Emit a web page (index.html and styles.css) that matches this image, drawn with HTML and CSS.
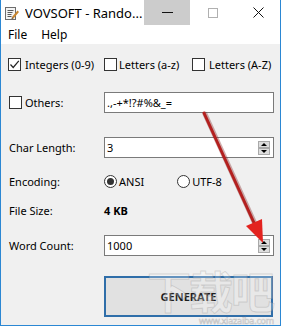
FILE: index.html
```html
<!DOCTYPE html>
<html>
<head>
<meta charset="utf-8">
<link rel="stylesheet" href="styles.css">
</head>
<body>
<div class="window">
  <div class="titlebar">
    <svg class="app-icon" viewBox="0 0 14 14">
      <rect x="0.5" y="1.5" width="10" height="12" fill="#f4f4f4" stroke="#6d6d6d"/>
      <line x1="2.5" y1="4.5" x2="8.5" y2="4.5" stroke="#5a5a5a"/>
      <line x1="2.5" y1="6.5" x2="7.5" y2="6.5" stroke="#5a5a5a"/>
      <line x1="2.5" y1="8.5" x2="6.5" y2="8.5" stroke="#5a5a5a"/>
      <line x1="2.5" y1="10.5" x2="6.5" y2="10.5" stroke="#5a5a5a"/>
      <path d="M7 11 L12.5 4.5 L14 6 L8.5 12.5 Z" fill="#c9862f"/>
      <path d="M7 11 L6.5 13 L8.5 12.5 Z" fill="#5b3a12"/>
    </svg>
    <span class="title">VOVSOFT - Rando...</span>
    <div class="caption">
      <div class="cbtn min"><span class="min-line"></span></div>
      <div class="cbtn max"><span class="max-box"></span></div>
      <div class="cbtn close">
        <svg width="11" height="11" viewBox="0 0 11 11"><path d="M0.5 0.5 L10.5 10.5 M10.5 0.5 L0.5 10.5" stroke="#111" stroke-width="1"/></svg>
      </div>
    </div>
  </div>
  <div class="menubar"><span class="menu-item">File</span><span class="menu-item">Help</span></div>
  <div class="client">
    <div class="row checks">
      <label class="check-item">
        <span class="checkbox"><svg width="11" height="11" viewBox="0 0 11 11"><path d="M1.5 5.5 L4.2 8.5 L9.8 1.8" fill="none" stroke="#222" stroke-width="1.2"/></svg></span>
        <span class="ctext">Integers (0-9)</span>
      </label>
      <label class="check-item">
        <span class="checkbox"></span>
        <span class="ctext tight">Letters (a-z)</span>
      </label>
      <label class="check-item">
        <span class="checkbox"></span>
        <span class="ctext">Letters (A-Z)</span>
      </label>
    </div>

    <div class="row field-row r-others">
      <div class="label others-label"><span class="checkbox"></span><span class="ctext">Others:</span></div>
      <div class="input"><span class="value">.,-+*!?#%&amp;_=</span></div>
    </div>

    <div class="row field-row r-len">
      <div class="label">Char Length:</div>
      <div class="input"><span class="value">3</span>
        <div class="spin"><span class="sbtn"><span class="tri-up"></span></span><span class="sbtn"><span class="tri-down"></span></span></div>
      </div>
    </div>

    <div class="row field-row r-enc">
      <div class="label">Encoding:</div>
      <div class="radios">
        <span class="radio-item"><span class="radio on"></span><span class="rtext">ANSI</span></span>
        <span class="radio-item second"><span class="radio"></span><span class="rtext">UTF-8</span></span>
      </div>
    </div>

    <div class="row field-row r-size">
      <div class="label">File Size:</div>
      <div class="bold-val">4 KB</div>
    </div>

    <div class="row field-row r-count">
      <div class="label">Word Count:</div>
      <div class="input"><span class="value">1000</span>
        <div class="spin"><span class="sbtn"><span class="tri-up"></span></span><span class="sbtn"><span class="tri-down"></span></span></div>
      </div>
    </div>

    <div class="row field-row r-gen">
      <div class="label"></div>
      <div class="gen-btn">GENERATE</div>
    </div>
  </div>

  <div class="watermark-big">下载吧</div>
  <div class="watermark-url">www.xiazaiba.com</div>

  <svg class="arrow" viewBox="0 0 282 328" width="282" height="328">
    <line x1="205" y1="114" x2="256" y2="226" stroke="#7a1a1a" stroke-opacity="0.35" stroke-width="5" stroke-linecap="round"/>
    <line x1="204" y1="113" x2="255" y2="225" stroke="#b3201f" stroke-width="3" stroke-linecap="round"/>
    <path d="M263 243 L246 226 L262 219 Z" fill="#e3231f"/>
  </svg>
</div>
</body>
</html>
```

FILE: styles.css
```css
* { box-sizing: border-box; }
html, body { margin: 0; padding: 0; background: #ffffff; }
body {
  width: 282px;
  height: 328px;
  overflow: hidden;
  font-family: "Noto Sans", "DejaVu Sans", sans-serif;
  font-size: 11px;
  color: #000;
}
.window {
  position: relative;
  width: 281px;
  height: 326px;
  border: 1px solid #2b87d3;
  border-top: none;
  background: #f0f0f0;
  display: flex;
  flex-direction: column;
}
.titlebar {
  height: 25px;
  background: #fff;
  display: flex;
  align-items: center;
}
.app-icon { width: 14px; height: 14px; margin-left: 4px; margin-right: 6px; flex: none; }
.title { font-size: 13px; flex: 1; white-space: nowrap; overflow: hidden; color: #000; }
.caption { display: flex; align-self: stretch; flex: none; }
.cbtn { width: 46px; display: flex; align-items: center; justify-content: center; }
.cbtn.close { width: 44px; }
.cbtn.min { background: #cccccc; }
.min-line { width: 11px; height: 1px; background: #111; }
.max-box { width: 10px; height: 10px; border: 1px solid #b0b0b0; }
.menubar {
  height: 19px;
  background: #fff;
  display: flex;
  align-items: center;
  padding-left: 7px;
  gap: 14px;
  font-size: 12px;
}
.client {
  flex: 1;
  padding: 13px 0 0 7px;
  display: flex;
  flex-direction: column;
}
.row { display: flex; align-items: center; }
.checks { height: 14px; }
.check-item { display: flex; align-items: center; }
.check-item:nth-child(1) { width: 96px; }
.check-item:nth-child(2) { width: 88px; }
.checkbox {
  width: 13px; height: 13px;
  border: 1px solid #333;
  background: #fff;
  display: flex; align-items: center; justify-content: center;
  flex: none;
}
.ctext { margin-left: 4px; white-space: nowrap; }
.ctext.tight { margin-left: 2px; }
.field-row { height: 21px; }
.label { width: 96px; padding-left: 1px; flex: none; white-space: nowrap; }
.others-label { display: flex; align-items: center; padding-left: 1px; }
.others-label .ctext { margin-left: 3px; }
.r-others { margin-top: 21px; }
.r-len { margin-top: 24px; }
.r-enc { margin-top: 13px; }
.r-size { margin-top: 8px; }
.r-count { margin-top: 14px; }
.r-gen { margin-top: 20px; height: 41px; align-items: stretch; }
.input {
  width: 170px;
  height: 21px;
  border: 1px solid #7a7a7a;
  background: #fff;
  display: flex;
  align-items: center;
  padding-left: 2px;
}
.value { flex: 1; white-space: nowrap; }
.spin { display: flex; flex-direction: column; margin-right: 3px; }
.sbtn {
  width: 12px; height: 7px;
  background: #dedede;
  border: 1px solid #a9a9a9;
  display: flex; align-items: center; justify-content: center;
}
.tri-up { width: 0; height: 0; border-left: 3px solid transparent; border-right: 3px solid transparent; border-bottom: 3px solid #000; }
.tri-down { width: 0; height: 0; border-left: 3px solid transparent; border-right: 3px solid transparent; border-top: 3px solid #000; }
.radios { display: flex; align-items: center; }
.radio-item { display: flex; align-items: center; }
.radio-item.second { margin-left: 33px; }
.radio {
  width: 13px; height: 13px;
  border-radius: 50%;
  border: 1px solid #333;
  background: #fff;
  display: flex; align-items: center; justify-content: center;
}
.radio.on::after { content: ""; width: 7px; height: 7px; border-radius: 50%; background: #333; }
.rtext { margin-left: 2px; }
.bold-val { font-weight: bold; }
.gen-btn {
  width: 169px;
  border: 2px solid #2f6ea9;
  background: #e1e1e1;
  display: flex; align-items: center; justify-content: center;
  font-weight: bold;
  color: #1e1e1e;
}
.arrow { position: absolute; left: -1px; top: 0; pointer-events: none; }
.watermark-big {
  position: absolute;
  left: 146px; top: 268px;
  font-family: "Noto Sans CJK SC", sans-serif;
  font-size: 44px;
  line-height: 44px;
  font-weight: bold;
  letter-spacing: -2px;
  color: rgba(255,255,255,0.25);
  -webkit-text-stroke: 1px rgba(140,140,140,0.28);
  pointer-events: none;
  white-space: nowrap;
}
.watermark-url {
  position: absolute;
  left: 198px; top: 315px;
  font-size: 9px;
  line-height: 11px;
  letter-spacing: -0.2px;
  color: rgba(255,255,255,0.6);
  -webkit-text-stroke: 0.6px rgba(150,150,150,0.5);
  white-space: nowrap;
  pointer-events: none;
}
```
